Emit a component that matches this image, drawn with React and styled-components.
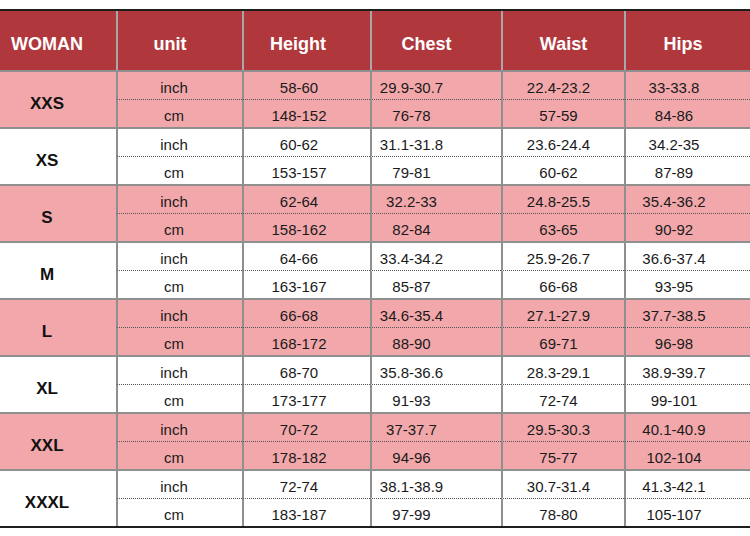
import React from "react";
import styled, { createGlobalStyle, css } from "styled-components";

const GlobalStyle = createGlobalStyle`
  body {
    margin: 0;
    background: #ffffff;
    font-family: "Liberation Sans", Arial, sans-serif;
  }
`;

const COLS = "116px 126px 128px 131px 123px 126px";
// padding-right per column, text in the source sits a little left of centre
const SHIFT = [22, 12, 16, 50, 10, 28];
const HEAD_SHIFT = [22, 20, 18, 20, 0, 10];

const headers = ["WOMAN", "unit", "Height", "Chest", "Waist", "Hips"];

const sizes = [
  { name: "XXS", inch: ["58-60", "29.9-30.7", "22.4-23.2", "33-33.8"], cm: ["148-152", "76-78", "57-59", "84-86"] },
  { name: "XS", inch: ["60-62", "31.1-31.8", "23.6-24.4", "34.2-35"], cm: ["153-157", "79-81", "60-62", "87-89"] },
  { name: "S", inch: ["62-64", "32.2-33", "24.8-25.5", "35.4-36.2"], cm: ["158-162", "82-84", "63-65", "90-92"] },
  { name: "M", inch: ["64-66", "33.4-34.2", "25.9-26.7", "36.6-37.4"], cm: ["163-167", "85-87", "66-68", "93-95"] },
  { name: "L", inch: ["66-68", "34.6-35.4", "27.1-27.9", "37.7-38.5"], cm: ["168-172", "88-90", "69-71", "96-98"] },
  { name: "XL", inch: ["68-70", "35.8-36.6", "28.3-29.1", "38.9-39.7"], cm: ["173-177", "91-93", "72-74", "99-101"] },
  { name: "XXL", inch: ["70-72", "37-37.7", "29.5-30.3", "40.1-40.9"], cm: ["178-182", "94-96", "75-77", "102-104"] },
  { name: "XXXL", inch: ["72-74", "38.1-38.9", "30.7-31.4", "41.3-42.1"], cm: ["183-187", "97-99", "78-80", "105-107"] },
];

const Chart = styled.div`
  width: 750px;
  padding-top: 9px;
`;

const Table = styled.div`
  border-top: 2px solid #1e1e1e;
  border-bottom: 2px solid #1e1e1e;
`;

const HeaderRow = styled.div`
  display: grid;
  grid-template-columns: ${COLS};
  height: 61px;
  background: #b0383d;
  border-bottom: 2px solid #8f8f8f;
  box-sizing: border-box;
`;

const HeadCell = styled.div`
  display: flex;
  align-items: center;
  justify-content: center;
  padding-top: 8px;
  padding-right: ${(p) => p.$shift}px;
  color: #ffffff;
  font-weight: 700;
  font-size: 18px;
  ${(p) =>
    p.$col > 0 &&
    css`
      border-left: 2px solid #a8a8a8;
    `}
`;

const SizeGroup = styled.div`
  display: grid;
  grid-template-columns: ${COLS};
  grid-template-rows: 28px 27px;
  background: ${(p) => (p.$pink ? "#f2a8ab" : "#ffffff")};
  border-bottom: ${(p) => (p.$last ? "none" : "2px solid #8f8f8f")};
`;

const SizeCell = styled.div`
  grid-row: 1 / span 2;
  display: flex;
  align-items: center;
  justify-content: center;
  padding: 9px 22px 0 0;
  font-weight: 700;
  font-size: 17px;
  color: #111111;
`;

const ValueCell = styled.div`
  display: flex;
  align-items: center;
  justify-content: center;
  padding: 3px ${(p) => p.$shift}px 0 0;
  border-left: 2px solid #8f8f8f;
  font-size: 15px;
  color: #1a1a1a;
  ${(p) =>
    p.$top &&
    css`
      border-bottom: 1px dotted #555555;
    `}
`;

export default function App() {
  return (
    <>
      <GlobalStyle />
      <Chart>
        <Table>
          <HeaderRow>
            {headers.map((h, i) => (
              <HeadCell key={h} $col={i} $shift={HEAD_SHIFT[i]}>
                {h}
              </HeadCell>
            ))}
          </HeaderRow>
          {sizes.map((s, i) => (
            <SizeGroup key={s.name} $pink={i % 2 === 0} $last={i === sizes.length - 1}>
              <SizeCell>{s.name}</SizeCell>
              <ValueCell $top $shift={SHIFT[1]}>inch</ValueCell>
              {s.inch.map((v, j) => (
                <ValueCell key={"i" + j} $top $shift={SHIFT[j + 2]}>
                  {v}
                </ValueCell>
              ))}
              <ValueCell $shift={SHIFT[1]}>cm</ValueCell>
              {s.cm.map((v, j) => (
                <ValueCell key={"c" + j} $shift={SHIFT[j + 2]}>
                  {v}
                </ValueCell>
              ))}
            </SizeGroup>
          ))}
        </Table>
      </Chart>
    </>
  );
}
